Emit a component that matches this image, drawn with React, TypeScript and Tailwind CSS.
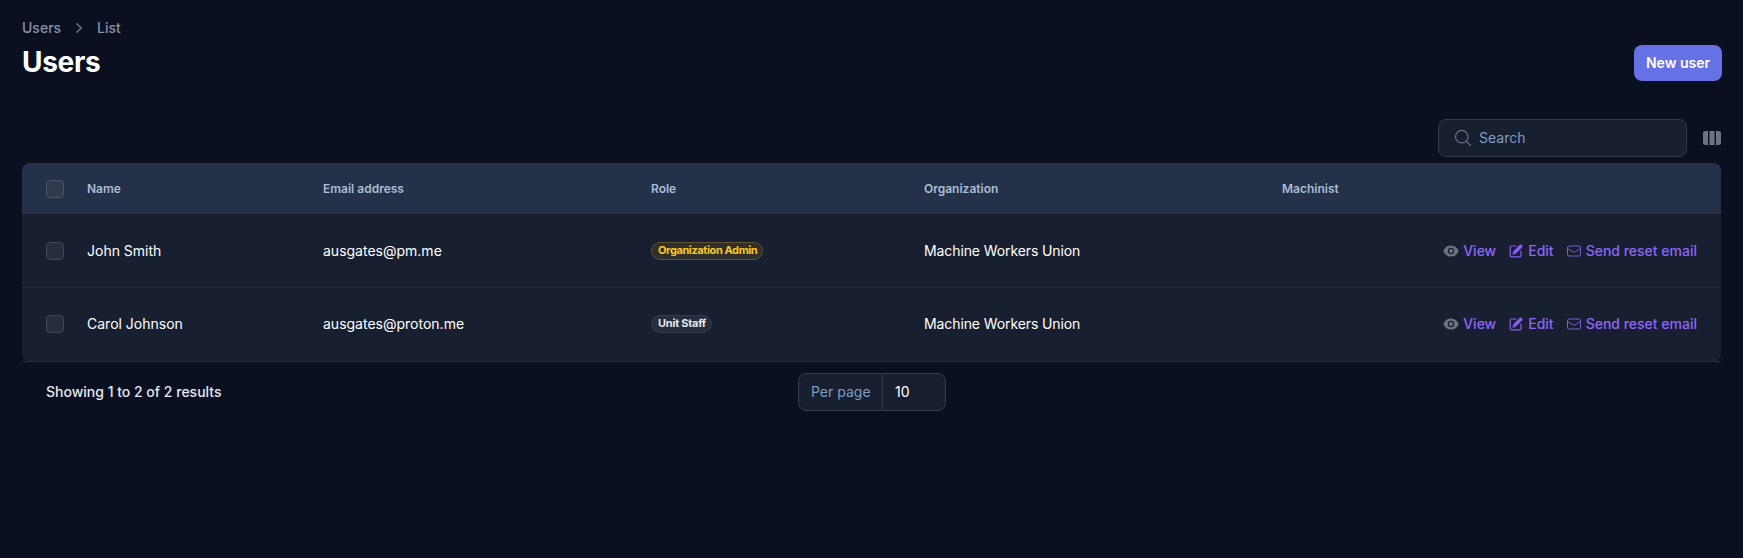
import React from "react";

const rows = [
  { name: "John Smith", email: "ausgates@pm.me", role: "Organization Admin", tone: "amber" },
  { name: "Carol Johnson", email: "ausgates@proton.me", role: "Unit Staff", tone: "slate" },
];

function Eye() {
  return (
    <svg viewBox="0 0 20 20" fill="currentColor" className="w-4 h-4 text-[#6b7280]">
      <path d="M10 12.5a2.5 2.5 0 1 0 0-5 2.5 2.5 0 0 0 0 5Z" />
      <path fillRule="evenodd" clipRule="evenodd" d="M.664 10.59a1.651 1.651 0 0 1 0-1.186A10.004 10.004 0 0 1 10 3c4.257 0 7.893 2.66 9.336 6.41.147.381.146.804 0 1.186A10.004 10.004 0 0 1 10 17c-4.257 0-7.893-2.66-9.336-6.41ZM14 10a4 4 0 1 1-8 0 4 4 0 0 1 8 0Z" />
    </svg>
  );
}

function EditIcon() {
  return (
    <svg viewBox="0 0 20 20" fill="currentColor" className="w-4 h-4 text-[#8b5cf6]">
      <path d="m5.433 13.917 1.262-3.155A4 4 0 0 1 7.58 9.42l6.92-6.918a2.121 2.121 0 0 1 3 3l-6.92 6.918c-.383.383-.84.685-1.343.886l-3.154 1.262a.5.5 0 0 1-.65-.65Z" />
      <path d="M3.5 5.75c0-.69.56-1.25 1.25-1.25H10A.75.75 0 0 0 10 3H4.75A2.75 2.75 0 0 0 2 5.75v9.5A2.75 2.75 0 0 0 4.75 18h9.5A2.75 2.75 0 0 0 17 15.25V10a.75.75 0 0 0-1.5 0v5.25c0 .69-.56 1.25-1.25 1.25h-9.5c-.69 0-1.25-.56-1.25-1.25v-9.5Z" />
    </svg>
  );
}

function Mail() {
  return (
    <svg viewBox="0 0 24 24" fill="none" stroke="currentColor" strokeWidth="1.5" className="w-4 h-4 text-[#7c5ad0]">
      <path strokeLinecap="round" strokeLinejoin="round" d="M21.75 6.75v10.5a2.25 2.25 0 0 1-2.25 2.25h-15a2.25 2.25 0 0 1-2.25-2.25V6.75m19.5 0A2.25 2.25 0 0 0 19.5 4.5h-15a2.25 2.25 0 0 0-2.25 2.25m19.5 0v.243a2.25 2.25 0 0 1-1.07 1.916l-7.5 4.615a2.25 2.25 0 0 1-2.36 0L3.32 8.91a2.25 2.25 0 0 1-1.07-1.916V6.75" />
    </svg>
  );
}

function Box({ head }: { head?: boolean }) {
  return (
    <span
      className={
        head
          ? "block w-[18px] h-[18px] rounded-[4px] border border-[#4b5567] bg-[#2f3a4d]"
          : "block w-[18px] h-[18px] rounded-[4px] border border-[#414957] bg-[#262e3d]"
      }
    />
  );
}

export default function App() {
  return (
    <div className="min-h-[558px] bg-[#0b1020] px-[22px] font-['Inter',sans-serif] text-sm text-white">
      <div className="flex items-start justify-between pt-[18px]">
        <div>
          <nav className="flex items-center gap-2 h-[20px] text-sm font-medium text-[#8593a6]">
            <span>Users</span>
            <svg viewBox="0 0 20 20" fill="currentColor" className="w-5 h-5 text-[#6b7280]">
              <path fillRule="evenodd" clipRule="evenodd" d="M7.21 14.77a.75.75 0 0 1 .02-1.06L11.168 10 7.23 6.29a.75.75 0 1 1 1.04-1.08l4.5 4.25a.75.75 0 0 1 0 1.08l-4.5 4.25a.75.75 0 0 1-1.06-.02Z" />
            </svg>
            <span>List</span>
          </nav>
          <h1 className="mt-[6px] text-[28px] leading-9 font-bold tracking-[-0.3px]">Users</h1>
        </div>
        <button className="mt-[27px] -mr-px w-[88px] h-9 rounded-lg bg-[#6671e5] text-sm font-semibold text-white">New user</button>
      </div>

      <div className="mt-[38px] flex items-center justify-end h-[38px]">
        <div className="flex items-center w-[249px] h-[38px] rounded-lg border border-[#31394a] bg-[#171f31] pl-[14px]">
          <svg viewBox="0 0 24 24" fill="none" stroke="currentColor" strokeWidth="1.5" className="w-5 h-5 text-[#6b7280]">
            <path strokeLinecap="round" strokeLinejoin="round" d="m21 21-5.197-5.197m0 0A7.5 7.5 0 1 0 5.196 5.196a7.5 7.5 0 0 0 10.607 10.607Z" />
          </svg>
          <span className="ml-[6px] text-sm text-[#7f9cc0]">Search</span>
        </div>
        <svg viewBox="0 0 18 14" fill="#6b7280" className="ml-[16px] w-[18px] h-[14px]">
          <path d="M2 0h3v14H2a2 2 0 0 1-2-2V2a2 2 0 0 1 2-2Z" />
          <rect x="6.5" width="5" height="14" />
          <path d="M13 0h3a2 2 0 0 1 2 2v10a2 2 0 0 1-2 2h-3V0Z" />
        </svg>
      </div>

      <div className="mt-[6px]">
        <div className="rounded-lg overflow-hidden bg-[#171f31]">
          <table className="w-full table-fixed border-collapse">
            <colgroup>
              <col className="w-[65px]" />
              <col className="w-[236px]" />
              <col className="w-[328px]" />
              <col className="w-[273px]" />
              <col className="w-[358px]" />
              <col className="w-[120px]" />
              <col />
            </colgroup>
            <thead>
              <tr className="h-[51px] bg-[#243148] text-xs font-semibold text-[#a8bdd6]">
                <th className="pl-6 pt-px text-left font-semibold"><Box head /></th>
                <th className="pt-px text-left font-semibold">Name</th>
                <th className="pt-px text-left font-semibold">Email address</th>
                <th className="pt-px text-left font-semibold">Role</th>
                <th className="pt-px text-left font-semibold">Organization</th>
                <th className="pt-px text-left font-semibold">Machinist</th>
                <th />
              </tr>
            </thead>
            <tbody>
              {rows.map((r, i) => {
                const pad = i === 0 ? "pt-px" : "pb-[2px]";
                return (
                  <tr key={r.name} className={i === 0 ? "h-[73px] border-b border-[#252d3d]" : "h-[75px]"}>
                    <td className={`pl-6 ${pad}`}><Box /></td>
                    <td className={pad}>{r.name}</td>
                    <td className={pad}>{r.email}</td>
                    <td className={pad}>
                      <span
                        className={
                          r.tone === "amber"
                            ? "flex w-fit items-center h-[18px] pl-[6px] pr-[5px] rounded-full border border-[#5f5330] bg-[#2f3029] text-[11px] font-bold tracking-[-0.4px] text-[#fbc926]"
                            : "flex w-fit items-center h-[18px] pl-[6px] pr-[5px] rounded-full border border-[#323a4c] bg-[#262e3e] text-[11px] font-bold tracking-[-0.25px] text-[#e5e7eb]"
                        }
                      >
                        {r.role}
                      </span>
                    </td>
                    <td className={`${pad} tracking-[-0.1px]`}>Machine Workers Union</td>
                    <td />
                    <td className={`pr-6 ${pad}`}>
                      <div className="flex items-center justify-end gap-3 text-sm font-medium text-[#8f66f7] whitespace-nowrap">
                        <span className="flex items-center gap-1"><Eye />View</span>
                        <span className="flex items-center gap-1"><EditIcon />Edit</span>
                        <span className="flex items-center gap-1"><Mail />Send reset email</span>
                      </div>
                    </td>
                  </tr>
                );
              })}
            </tbody>
          </table>
        </div>
        <div className="relative flex items-center h-[61px] -mt-[1px] border-t border-[#252d3d] pl-6 pb-[1px]">
          <span className="text-sm font-medium text-[#e5e9f0]">Showing 1 to 2 of 2 results</span>
          <div className="absolute left-[776px] top-[11px] flex items-center w-[148px] h-[38px] rounded-lg border border-[#31394a] bg-[#171f31]">
            <span className="w-[83px] pl-3 text-sm text-[#7f9cc0]">Per page</span>
            <span className="h-full w-px bg-[#31394a]" />
            <span className="pl-3 text-sm text-white">10</span>
          </div>
        </div>
      </div>
    </div>
  );
}
